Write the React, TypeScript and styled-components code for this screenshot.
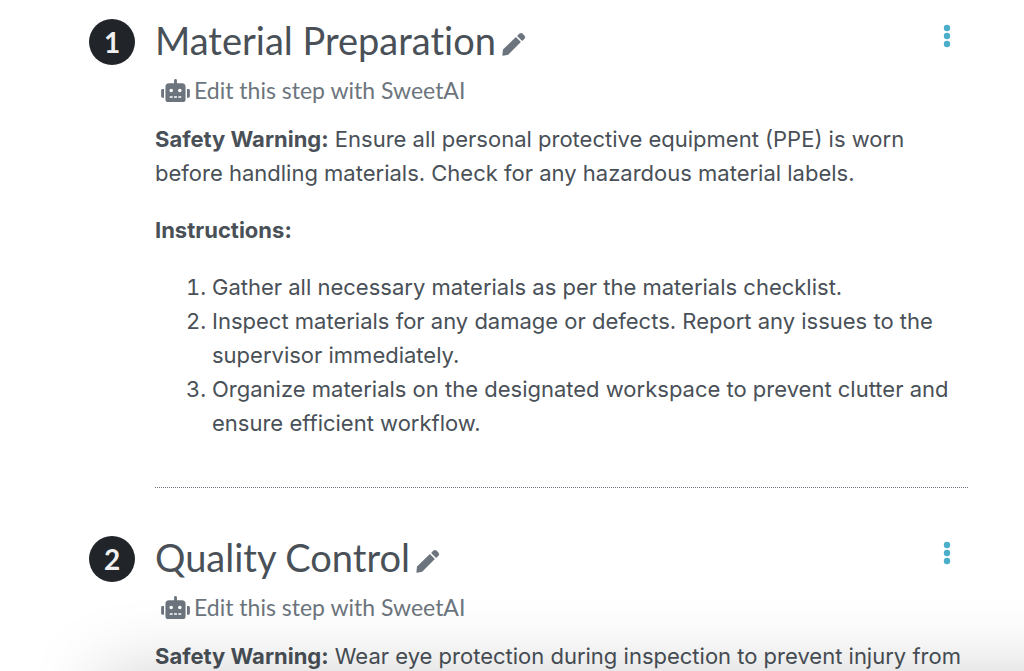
import React from "react";
import styled, { createGlobalStyle } from "styled-components";
import { FaRobot } from "react-icons/fa";

const GlobalStyle = createGlobalStyle`
  *, *::before, *::after { box-sizing: border-box; }
  body {
    margin: 0;
    background: #fff;
    color: #495057;
    font-family: Inter, "Liberation Sans", sans-serif;
    font-size: 22px;
    line-height: 34px;
  }
  #root { height: 100vh; overflow: hidden; }
`;

const Page = styled.main`
  padding: 15px 56px 0 89px;
`;

const StepRow = styled.section`
  display: grid;
  grid-template-columns: 46px minmax(0, 1fr);
  column-gap: 20px;
`;

const StepNumber = styled.div`
  display: flex;
  align-items: center;
  justify-content: center;
  width: 46px;
  height: 46px;
  margin-top: 4px;
  border-radius: 50%;
  background: #212529;
  color: #f1f1f1;
  font: 700 28px/46px Lato, sans-serif;
`;

const StepContent = styled.div`
  border-bottom: 1px dotted #6c757d;
  padding-bottom: 47px;
  margin-bottom: 44px;
`;

const StepHeader = styled.header`
  display: flex;
  align-items: flex-start;
  justify-content: space-between;
`;

const TitleGroup = styled.div`
  display: flex;
  align-items: center;
  gap: 6px;
`;

const Title = styled.h2`
  margin: 0;
  font: 400 38px/50px Lato, sans-serif;
  font-variant-ligatures: none;
`;

const IconButton = styled.button`
  display: flex;
  border: 0;
  padding: 0;
  background: none;
  color: #6c757d;
  cursor: pointer;
`;

const EditTitleButton = styled(IconButton)`
  margin-top: 8px;
`;

const MenuButton = styled(IconButton)`
  padding: 9px 16px;
  color: #4bafca;
`;

const AiButton = styled(IconButton)`
  align-items: center;
  gap: 4px;
  margin: 8px 0 15px 6px;
  font: 400 23px/34px Lato, sans-serif;
  font-variant-ligatures: none;
`;

const RobotIcon = styled(FaRobot)`
  width: 29px;
  height: 23px;
`;

const Body = styled.div`
  p { margin: 0 0 23px; }
  ol { margin: 0; padding-left: 57px; }
  strong { font-weight: 700; }
`;

const BottomPanel = styled.div`
  position: fixed;
  top: 100%;
  left: 100px;
  right: -80px;
  height: 120px;
  box-shadow: 0 0 72px rgba(0, 0, 0, 0.18);
  pointer-events: none;
`;

function PencilIcon() {
  return (
    <svg width="24" height="24" viewBox="0 0 24 24" fill="currentColor" aria-hidden="true">
      <path d="M0.4 23.1 1 17.6 13.9 5.1 18.9 10.1 6.2 22.7 1 23.7Q0.3 23.8 0.4 23.1Z" />
      <path d="M15.1 3.9 17.5 1.6Q19 0.2 20.5 1.6L22.6 3.7Q24 5.2 22.5 6.7L20.1 8.9Z" />
    </svg>
  );
}

function MoreIcon() {
  return (
    <svg width="10" height="24" viewBox="0 0 10 24" fill="currentColor" aria-hidden="true">
      <circle cx="5" cy="4" r="3.2" />
      <circle cx="5" cy="12" r="3.2" />
      <circle cx="5" cy="20" r="3.2" />
    </svg>
  );
}

type StepProps = { number: number; title: string; children: React.ReactNode };

function Step({ number, title, children }: StepProps) {
  return (
    <StepRow>
      <StepNumber>{number}</StepNumber>
      <StepContent>
        <StepHeader>
          <TitleGroup>
            <Title>{title}</Title>
            <EditTitleButton type="button" aria-label={`Edit title: ${title}`}>
              <PencilIcon />
            </EditTitleButton>
          </TitleGroup>
          <MenuButton type="button" aria-label={`Options for ${title}`}>
            <MoreIcon />
          </MenuButton>
        </StepHeader>
        <AiButton type="button">
          <RobotIcon />
          Edit this step with SweetAI
        </AiButton>
        <Body>{children}</Body>
      </StepContent>
    </StepRow>
  );
}

export default function App() {
  return (
    <>
      <GlobalStyle />
      <Page>
        <Step number={1} title="Material Preparation">
          <p>
            <strong>Safety Warning:</strong> Ensure all personal protective equipment (PPE) is worn
            before handling materials. Check for any hazardous material labels.
          </p>
          <p>
            <strong>Instructions:</strong>
          </p>
          <ol>
            <li>Gather all necessary materials as per the materials checklist.</li>
            <li>
              Inspect materials for any damage or defects. Report any issues to the supervisor
              immediately.
            </li>
            <li>
              Organize materials on the designated workspace to prevent clutter and ensure efficient
              workflow.
            </li>
          </ol>
        </Step>
        <Step number={2} title="Quality Control">
          <p>
            <strong>Safety Warning:</strong> Wear eye protection during inspection to prevent injury
            from
          </p>
        </Step>
      </Page>
      <BottomPanel />
    </>
  );
}
